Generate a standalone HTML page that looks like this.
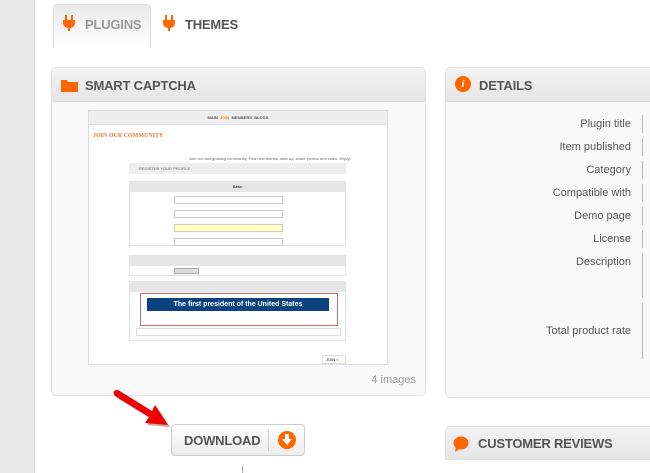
<!DOCTYPE html>
<html><head><style>
*{margin:0;padding:0;box-sizing:border-box}
body{width:650px;height:473px;overflow:hidden;background:#fff;font-family:"Liberation Sans",sans-serif;position:relative}
.strip{position:absolute;left:0;top:0;width:35px;height:473px;background:#e8e8e8;border-right:1px solid #d6d6d6}
.abs{position:absolute}
.h{font-weight:bold;color:#555;font-size:13px;letter-spacing:-0.2px}
.panel{position:absolute;border:1px solid #e2e2e2;border-radius:5px;background:#f9f9f9;overflow:hidden}
.ph{height:34px;background:linear-gradient(#f3f3f3,#e6e6e6);border-bottom:1px solid #ddd;position:relative}
.lbl{position:absolute;right:19px;font-size:11px;color:#555;text-align:right;white-space:nowrap}
.bar{position:absolute;right:7px;width:1px;background:#bbb}
.shot{position:absolute;left:88px;top:110px;width:300px;height:255px;background:#fff;border:1px solid #ddd}
.tiny{font-size:4px;color:#666}
</style></head><body>
<div class="strip"></div>
<div class="abs" style="left:53px;top:4px;width:98px;height:43px;background:linear-gradient(#e9e9e9,#fff);border:1px solid #ddd;border-bottom:none;border-radius:4px 4px 0 0"></div>
<svg class="abs" style="left:63px;top:15px" width="12" height="16" viewBox="0 0 12 16"><rect x="2" y="0" width="2" height="5" fill="#f60"/><rect x="8" y="0" width="2" height="5" fill="#f60"/><path d="M0 5h12v3a5 5 0 0 1-5 5v3h-2v-3a5 5 0 0 1-5-5z" fill="#f60"/></svg>
<div class="abs h" style="left:85px;top:17px;color:#999">PLUGINS</div>
<svg class="abs" style="left:163px;top:15px" width="12" height="16" viewBox="0 0 12 16"><rect x="2" y="0" width="2" height="5" fill="#f60"/><rect x="8" y="0" width="2" height="5" fill="#f60"/><path d="M0 5h12v3a5 5 0 0 1-5 5v3h-2v-3a5 5 0 0 1-5-5z" fill="#f60"/></svg>
<div class="abs h" style="left:185px;top:17px">THEMES</div>

<div class="panel" style="left:51px;top:67px;width:375px;height:329px">
<div class="ph"><svg class="abs" style="left:9px;top:11px" width="17" height="13" viewBox="0 0 17 13"><path d="M0 1h6l1 2h10v10H0z" fill="#f60"/></svg><div class="abs h" style="left:33px;top:10px">SMART CAPTCHA</div></div>
<div class="abs" style="right:9px;top:306px;font-size:11px;color:#999">4 images</div>
</div>
<div class="shot">
<div style="height:14px;background:#eee;border-bottom:1px solid #ddd;text-align:center;font-size:4px;line-height:14px;color:#555;font-weight:bold">MAIN &nbsp;<span style="color:#f80">JOIN</span>&nbsp; MEMBERS &nbsp;BLOGS</div>
<div class="abs" style="left:4px;top:22px;font-family:'Liberation Serif',serif;font-size:6px;color:#e87a2a;font-weight:bold">JOIN OUR COMMUNITY</div>
<div class="abs tiny" style="left:100px;top:45px">Join our fast-growing community. Find new friends, date up, share photos and video. Enjoy!</div>
<div class="abs" style="left:40px;top:52px;width:217px;height:11px;background:#eee;font-size:4px;color:#666;line-height:11px;padding-left:10px">REGISTER YOUR PROFILE</div>
<div class="abs" style="left:40px;top:70px;width:217px;height:65px;border:1px solid #e3e3e3">
<div style="height:10px;background:#e6e6e6;text-align:center;font-size:4px;line-height:10px">Basic</div>
<div class="abs" style="left:44px;top:14px;width:109px;height:8px;border:1px solid #ccc;background:#fff"></div>
<div class="abs" style="left:44px;top:28px;width:109px;height:8px;border:1px solid #ccc;background:#fff"></div>
<div class="abs" style="left:44px;top:42px;width:109px;height:8px;border:1px solid #ccc;background:#ffffc0"></div>
<div class="abs" style="left:44px;top:56px;width:109px;height:8px;border:1px solid #ccc;background:#fff"></div>
</div>
<div class="abs" style="left:40px;top:144px;width:217px;height:21px;border:1px solid #e3e3e3"><div style="height:10px;background:#e6e6e6"></div><div class="abs" style="left:44px;top:12px;width:25px;height:6px;background:#ddd;border:1px solid #aaa"></div></div>
<div class="abs" style="left:40px;top:170px;width:217px;height:60px;border:1px solid #e3e3e3"><div style="height:10px;background:#e6e6e6"></div>
<div class="abs" style="left:10px;top:11px;width:198px;height:33px;border:1px solid #d66"></div>
<div class="abs" style="left:17px;top:16px;width:182px;height:13px;background:#0b4380;color:#fff;font-size:7px;text-align:center;line-height:13px;font-weight:bold">The first president of the United States</div>
<div class="abs" style="left:6px;top:46px;width:205px;height:8px;border:1px solid #ddd"></div>
</div>
<div class="abs" style="left:233px;top:244px;width:24px;height:9px;border:1px solid #ddd;font-size:4px;line-height:8px;padding-left:3px">JOIN <span style="color:#f80">●</span></div>
</div>

<div class="panel" style="left:445px;top:67px;width:215px;height:331px">
<div class="ph"><div class="abs" style="left:9px;top:8px;width:16px;height:16px;border-radius:50%;background:#f60;color:#fff;font:italic bold 11px 'Liberation Serif',serif;text-align:center;line-height:16px">i</div><div class="abs h" style="left:33px;top:10px">DETAILS</div></div>
</div>
<div class="lbl" style="top:118px">Plugin title</div><div class="bar" style="top:115px;height:18px"></div>
<div class="lbl" style="top:141px">Item published</div><div class="bar" style="top:138px;height:18px"></div>
<div class="lbl" style="top:164px">Category</div><div class="bar" style="top:161px;height:18px"></div>
<div class="lbl" style="top:187px">Compatible with</div><div class="bar" style="top:184px;height:18px"></div>
<div class="lbl" style="top:210px">Demo page</div><div class="bar" style="top:207px;height:18px"></div>
<div class="lbl" style="top:233px">License</div><div class="bar" style="top:230px;height:18px"></div>
<div class="lbl" style="top:256px">Description</div><div class="bar" style="top:253px;height:45px"></div>
<div class="lbl" style="top:325px">Total product rate</div><div class="bar" style="top:303px;height:56px"></div>

<svg class="abs" style="left:110px;top:385px" width="65" height="45" viewBox="0 0 65 45"><g transform="translate(2,2)" fill="#600" opacity=".35"><path d="M8 5 L42 26 L45 20 L58 40 L35 38 L39 32 L5 11 Z"/></g><path d="M8 5 L42 26 L45 20 L58 40 L35 38 L39 32 L5 11 Z" fill="#e00"/><circle cx="6.5" cy="8" r="3" fill="#e00"/></svg>
<div class="abs" style="left:171px;top:424px;width:134px;height:32px;border:1px solid #ccc;border-radius:4px;background:linear-gradient(#fff,#ececec)">
<div class="abs h" style="left:12px;top:8px;font-size:13px">DOWNLOAD</div>
<div class="abs" style="left:96px;top:5px;width:1px;height:21px;background:#ccc"></div>
<div class="abs" style="left:106px;top:6px;width:18px;height:18px;border-radius:50%;background:#f60"></div>
<svg class="abs" style="left:110px;top:9px" width="10" height="12" viewBox="0 0 10 12"><path d="M3 0h4v5h3l-5 6-5-6h3z" fill="#fff"/></svg>
</div>
<div class="abs" style="left:242px;top:466px;width:1px;height:7px;background:#aaa"></div>
<div class="abs" style="left:445px;top:426px;width:215px;height:34px;border:1px solid #e2e2e2;border-radius:5px 0 0 0;background:linear-gradient(#f3f3f3,#e6e6e6)">
<svg class="abs" style="left:7px;top:9px" width="16" height="17" viewBox="0 0 16 17"><ellipse cx="8" cy="7" rx="7.5" ry="6.5" fill="#f60"/><path d="M3 11 L2 16 L8 12z" fill="#f60"/></svg>
<div class="abs h" style="left:32px;top:9px">CUSTOMER REVIEWS</div></div>
</body></html>
